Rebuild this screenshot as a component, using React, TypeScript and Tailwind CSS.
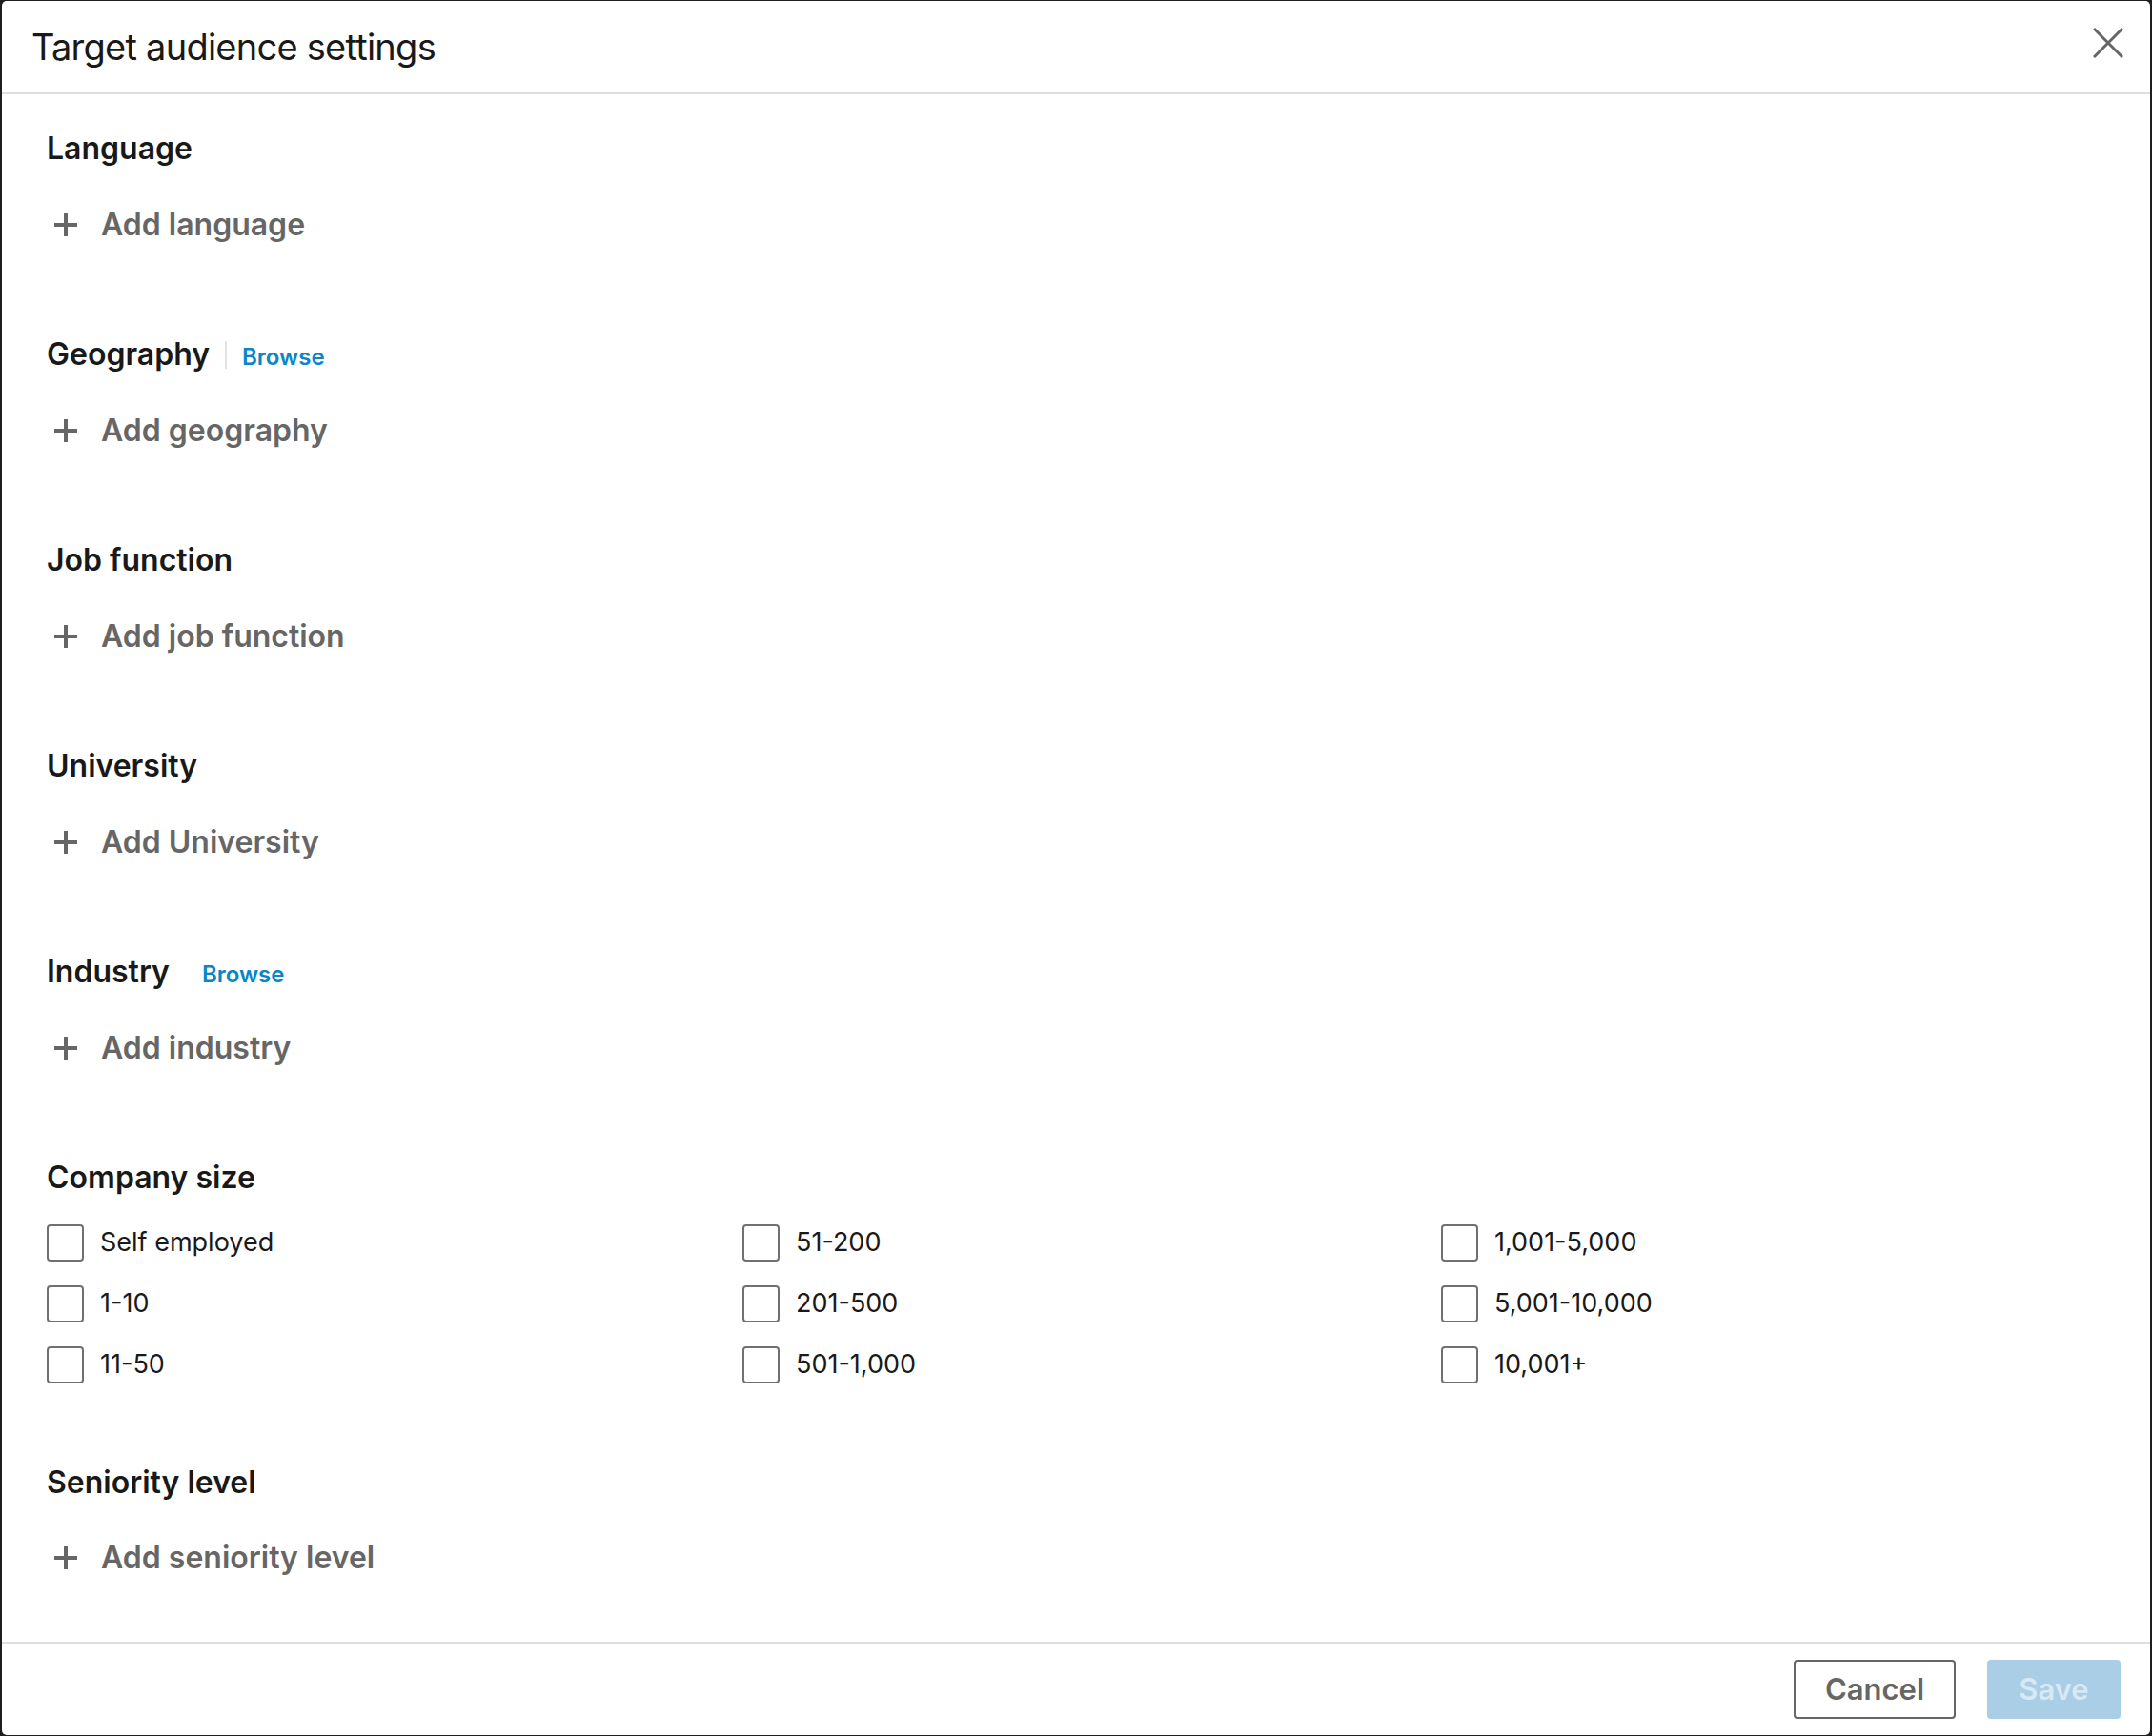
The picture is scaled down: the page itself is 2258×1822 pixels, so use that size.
import { Fragment } from "react";

const sections = [
  { title: "Language", add: "Add language" },
  { title: "Geography", add: "Add geography", browse: true, divider: true },
  { title: "Job function", add: "Add job function" },
  { title: "University", add: "Add University" },
  { title: "Industry", add: "Add industry", browse: true },
];

const sizes = [
  "Self employed",
  "51-200",
  "1,001-5,000",
  "1-10",
  "201-500",
  "5,001-10,000",
  "11-50",
  "501-1,000",
  "10,001+",
];

function PlusIcon() {
  return (
    <svg width="24" height="24" viewBox="0 0 24 24" fill="#666666">
      <rect x="10" y="0" width="4" height="24" />
      <rect x="0" y="10" width="24" height="4" />
    </svg>
  );
}

function SectionHeading({ title, browse, divider }: { title: string; browse?: boolean; divider?: boolean }) {
  return (
    <div className="flex h-[40px] items-baseline pl-[1px]">
      <h2 className="text-[32px] leading-[40px] font-semibold text-[#191919]">{title}</h2>
      {browse && (
        <Fragment>
          <span
            className={
              divider
                ? "mx-[16px] h-[29px] w-[2px] self-center bg-[#e3e3e3]"
                : "mx-[16px] h-[29px] w-[2px] self-center bg-transparent"
            }
          />
          <a className="text-[24px] leading-[40px] font-semibold text-[#0a86c6]">Browse</a>
        </Fragment>
      )}
    </div>
  );
}

function AddButton({ label }: { label: string }) {
  return (
    <button className="flex h-[40px] items-center gap-[25px] pl-[9px] text-[32px] leading-[40px] font-semibold text-[#666666]">
      <PlusIcon />
      {label}
    </button>
  );
}

export default function App() {
  return (
    <div className="h-[1822px] w-[2258px] bg-[#1e1e1e] px-[2px] py-[1px] font-['Inter',sans-serif]">
      <div className="flex h-full flex-col overflow-hidden rounded-[5px] bg-white">
        <header className="flex h-[98px] shrink-0 items-center justify-between border-b-2 border-[#dddddd] pl-[31px] pr-[28px]">
          <h1 className="text-[38px] leading-[48px] font-normal tracking-[-0.75px] text-[#191919]">
            Target audience settings
          </h1>
          <button className="mb-[8px] text-[#666666]">
            <svg width="32" height="32" viewBox="0 0 32 32" stroke="currentColor" strokeWidth="3">
              <line x1="1" y1="1" x2="31" y2="31" />
              <line x1="31" y1="1" x2="1" y2="31" />
            </svg>
          </button>
        </header>

        <div className="flex-1 pl-[46px] pt-[37px]">
          {sections.map((s, i) => (
            <section key={s.title} className={i === 0 ? "flex flex-col gap-[40px]" : "mt-[96px] flex flex-col gap-[40px]"}>
              <SectionHeading title={s.title} browse={s.browse} divider={s.divider} />
              <AddButton label={s.add} />
            </section>
          ))}

          <section className="mt-[96px]">
            <SectionHeading title="Company size" />
            <div className="mt-[28px] grid w-[2200px] grid-cols-[730px_733px_1fr] gap-y-[24px]">
              {sizes.map((size) => (
                <label key={size} className="flex h-[40px] items-center gap-[17px] pl-[1px]">
                  <span className="h-[39px] w-[39px] shrink-0 rounded-[4px] border-2 border-[#707070]" />
                  <span className="text-[27px] leading-[40px] text-[#191919]">{size}</span>
                </label>
              ))}
            </div>
          </section>

          <section className="mt-[84px] flex flex-col gap-[39px]">
            <SectionHeading title="Seniority level" />
            <AddButton label="Add seniority level" />
          </section>
        </div>

        <footer className="flex h-[98px] shrink-0 items-center justify-end gap-[33px] border-t-2 border-[#dddddd] pr-[31px]">
          <button className="h-[62px] w-[170px] rounded-[4px] border-2 border-[#666666] text-[31px] font-semibold text-[#666666]">
            Cancel
          </button>
          <button className="h-[62px] w-[140px] rounded-[4px] bg-[#a9cee6] text-[31px] font-semibold text-[#d6e9f5]">
            Save
          </button>
        </footer>
      </div>
    </div>
  );
}
